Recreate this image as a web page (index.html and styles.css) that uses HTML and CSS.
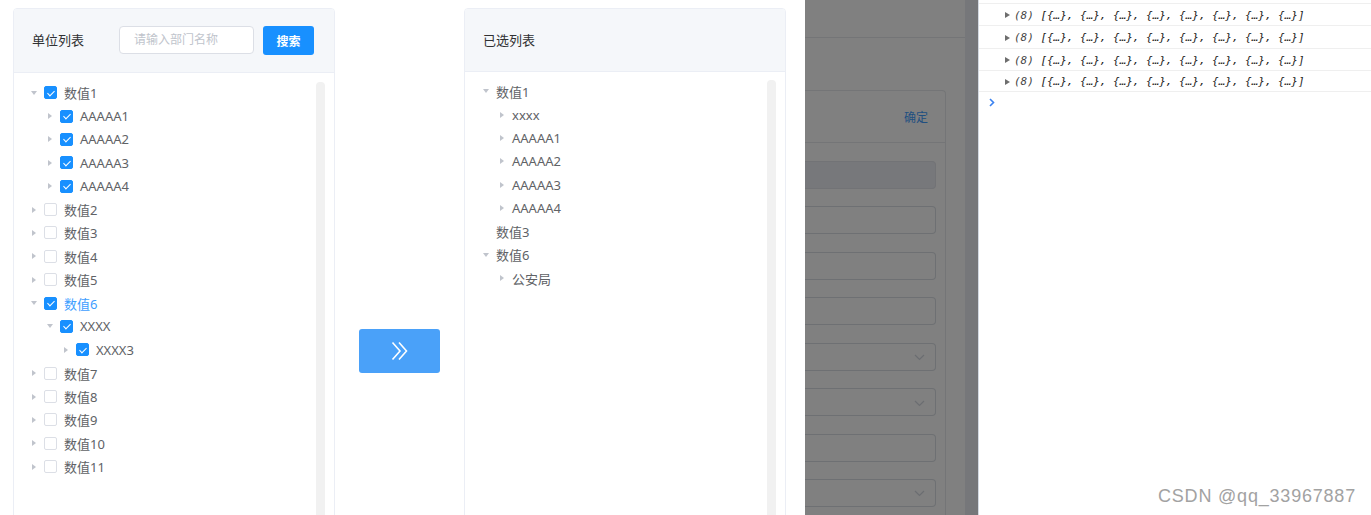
FILE: index.html
```html
<!DOCTYPE html>
<html lang="zh">
<head>
<meta charset="utf-8">
<title>Transfer Tree</title>
<link rel="stylesheet" href="styles.css">
</head>
<body>
<div class="screen">
  <main class="app">
    <section class="panel panel-left">
      <header class="panel-head">
        <span class="panel-title">单位列表</span>
        <div class="search">
          <input class="search-input" type="text" placeholder="请输入部门名称">
          <button class="btn-search" type="button">搜索</button>
        </div>
      </header>
      <div class="panel-body">
        <ul class="tree tree-check">
          <li class="node"><span class="caret down"></span><span class="cb on"></span><span class="label">数值1</span></li>
          <li class="node lv2"><span class="caret right"></span><span class="cb on"></span><span class="label">AAAAA1</span></li>
          <li class="node lv2"><span class="caret right"></span><span class="cb on"></span><span class="label">AAAAA2</span></li>
          <li class="node lv2"><span class="caret right"></span><span class="cb on"></span><span class="label">AAAAA3</span></li>
          <li class="node lv2"><span class="caret right"></span><span class="cb on"></span><span class="label">AAAAA4</span></li>
          <li class="node"><span class="caret right"></span><span class="cb"></span><span class="label">数值2</span></li>
          <li class="node"><span class="caret right"></span><span class="cb"></span><span class="label">数值3</span></li>
          <li class="node"><span class="caret right"></span><span class="cb"></span><span class="label">数值4</span></li>
          <li class="node"><span class="caret right"></span><span class="cb"></span><span class="label">数值5</span></li>
          <li class="node current"><span class="caret down"></span><span class="cb on"></span><span class="label">数值6</span></li>
          <li class="node lv2"><span class="caret down"></span><span class="cb on"></span><span class="label">XXXX</span></li>
          <li class="node lv3"><span class="caret right"></span><span class="cb on"></span><span class="label">XXXX3</span></li>
          <li class="node"><span class="caret right"></span><span class="cb"></span><span class="label">数值7</span></li>
          <li class="node"><span class="caret right"></span><span class="cb"></span><span class="label">数值8</span></li>
          <li class="node"><span class="caret right"></span><span class="cb"></span><span class="label">数值9</span></li>
          <li class="node"><span class="caret right"></span><span class="cb"></span><span class="label">数值10</span></li>
          <li class="node"><span class="caret right"></span><span class="cb"></span><span class="label">数值11</span></li>
        </ul>
        <div class="scroll-track"></div>
      </div>
    </section>

    <div class="transfer">
      <button class="btn-transfer" type="button" aria-label="添加">
        <svg width="17" height="20" viewBox="0 0 17 20" fill="none" stroke="#fff" stroke-width="1.6" stroke-linejoin="miter">
          <path d="M1.5 1.5 L9 10 L1.5 18.5"/>
          <path d="M8 1.5 L15.5 10 L8 18.5"/>
        </svg>
      </button>
    </div>

    <section class="panel panel-right">
      <header class="panel-head">
        <span class="panel-title">已选列表</span>
      </header>
      <div class="panel-body">
        <ul class="tree tree-plain">
          <li class="node"><span class="caret down"></span><span class="label">数值1</span></li>
          <li class="node lv2"><span class="caret right"></span><span class="label">xxxx</span></li>
          <li class="node lv2"><span class="caret right"></span><span class="label">AAAAA1</span></li>
          <li class="node lv2"><span class="caret right"></span><span class="label">AAAAA2</span></li>
          <li class="node lv2"><span class="caret right"></span><span class="label">AAAAA3</span></li>
          <li class="node lv2"><span class="caret right"></span><span class="label">AAAAA4</span></li>
          <li class="node"><span class="caret"></span><span class="label">数值3</span></li>
          <li class="node"><span class="caret down"></span><span class="label">数值6</span></li>
          <li class="node lv2"><span class="caret right"></span><span class="label">公安局</span></li>
        </ul>
        <div class="scroll-track"></div>
      </div>
    </section>
  </main>

  <div class="modal-bg">
    <div class="under">
      <div class="under-top"></div>
      <div class="under-card">
        <div class="under-card-head"><span class="under-ok">确定</span></div>
        <div class="under-form">
          <div class="field disabled"></div>
          <div class="field"></div>
          <div class="field"></div>
          <div class="field"></div>
          <div class="field select"><svg width="11" height="7" viewBox="0 0 11 7" fill="none" stroke="#6b6d71" stroke-width="1.2"><path d="M1 1 L5.5 5.5 L10 1"/></svg></div>
          <div class="field select"><svg width="11" height="7" viewBox="0 0 11 7" fill="none" stroke="#6b6d71" stroke-width="1.2"><path d="M1 1 L5.5 5.5 L10 1"/></svg></div>
          <div class="field"></div>
          <div class="field select"><svg width="11" height="7" viewBox="0 0 11 7" fill="none" stroke="#6b6d71" stroke-width="1.2"><path d="M1 1 L5.5 5.5 L10 1"/></svg></div>
        </div>
      </div>
    </div>
    <div class="under-scroll"></div>
  </div>

  <aside class="console">
    <div class="con-row"><span class="tri"></span><span class="con-text"><span class="len">(8)</span> [{…}, {…}, {…}, {…}, {…}, {…}, {…}, {…}]</span></div>
    <div class="con-row"><span class="tri"></span><span class="con-text"><span class="len">(8)</span> [{…}, {…}, {…}, {…}, {…}, {…}, {…}, {…}]</span></div>
    <div class="con-row"><span class="tri"></span><span class="con-text"><span class="len">(8)</span> [{…}, {…}, {…}, {…}, {…}, {…}, {…}, {…}]</span></div>
    <div class="con-row"><span class="tri"></span><span class="con-text"><span class="len">(8)</span> [{…}, {…}, {…}, {…}, {…}, {…}, {…}, {…}]</span></div>
    <div class="con-prompt">
      <svg width="6" height="9" viewBox="0 0 6 9" fill="none" stroke="#3b82f0" stroke-width="1.6"><path d="M1 1 L4.5 4.5 L1 8"/></svg>
    </div>
  </aside>

  <div class="watermark">CSDN @qq_33967887</div>
</div>
</body>
</html>
```

FILE: styles.css
```css
* { box-sizing: border-box; }
html, body { margin: 0; padding: 0; }
body {
  background: #fff;
  font-family: "Noto Sans", "Noto Sans CJK SC", sans-serif;
  color: #606266;
  overflow: hidden;
}
ul { list-style: none; margin: 0; padding: 0; }

.screen {
  position: relative;
  display: flex;
  width: 1371px;
  height: 515px;
  overflow: hidden;
}

/* ---------- main app ---------- */
.app {
  width: 805px;
  flex: none;
  display: flex;
  align-items: flex-start;
  padding: 8px 0 0 13px;
}
.panel {
  width: 322px;
  height: 640px;
  flex: none;
  border: 1px solid #ebeef5;
  border-radius: 4px;
  background: #fff;
  display: flex;
  flex-direction: column;
  overflow: hidden;
}
.panel-head {
  flex: none;
  display: flex;
  align-items: center;
  background: #f5f7fa;
  border-bottom: 1px solid #ebeef5;
  padding: 0 20px 0 18px;
}
.panel-left .panel-head { height: 64px; }
.panel-right .panel-head { height: 63px; }
.panel-title {
  font-size: 13px;
  color: #303133;
  line-height: 1;
}
.search {
  margin-left: auto;
  display: flex;
  align-items: center;
  gap: 9px;
}
.search-input {
  width: 135px;
  height: 28px;
  border: 1px solid #dcdfe6;
  border-radius: 4px;
  padding: 0 14px;
  font-family: "Noto Sans", "Noto Sans CJK SC", sans-serif;
  font-size: 12px;
  color: #606266;
  background: #fff;
  outline: none;
  margin-top: -2px;
}
.search-input::placeholder { color: #c0c4cc; }
.btn-search {
  width: 51px;
  height: 29px;
  border: none;
  border-radius: 3px;
  background: #1890ff;
  color: #fff;
  font-family: "Noto Sans", "Noto Sans CJK SC", sans-serif;
  font-size: 12px;
  font-weight: 600;
  padding: 0;
}

.panel-body {
  flex: 1;
  display: flex;
  min-height: 0;
}
.tree { flex: 1; }
.tree-check { padding: 8px 0 0 15px; }
.tree-plain { padding: 7.5px 0 0 16px; }
.scroll-track {
  flex: none;
  width: 9px;
  margin-right: 9px;
  background: #f1f1f1;
  border-radius: 4px 4px 0 0;
}
.panel-left .scroll-track { margin-top: 9px; }
.panel-right .scroll-track { margin-top: 8px; }

.node {
  display: flex;
  align-items: center;
  height: 23.375px;
  font-size: 13px;
  white-space: nowrap;
  color: #606266;
}
.node.lv2 { padding-left: 16px; }
.node.lv3 { padding-left: 32px; }
.node.current .label { color: #409eff; }

.caret {
  flex: none;
  width: 10px;
  height: 10px;
  display: flex;
  align-items: center;
  justify-content: center;
}
.caret.right::before {
  content: "";
  border-left: 4px solid #c0c4cc;
  border-top: 3px solid transparent;
  border-bottom: 3px solid transparent;
}
.caret.down::before {
  content: "";
  border-top: 4px solid #c0c4cc;
  border-left: 3.5px solid transparent;
  border-right: 3.5px solid transparent;
}

.cb {
  flex: none;
  position: relative;
  width: 13px;
  height: 13px;
  margin-left: 5px;
  border: 1px solid #dcdfe6;
  border-radius: 2px;
  background: #fff;
}
.cb.on {
  background: #1890ff;
  border-color: #1890ff;
}
.cb.on::after {
  content: "";
  position: absolute;
  left: 3.5px;
  top: 1.5px;
  width: 3px;
  height: 6px;
  border-right: 1.2px solid #fff;
  border-bottom: 1.2px solid #fff;
  transform: rotate(45deg);
}
.tree-check .label { margin-left: 7px; }
.tree-plain .label { margin-left: 5px; }

.transfer {
  flex: none;
  width: 129px;
  display: flex;
  justify-content: center;
  padding-top: 321px;
}
.btn-transfer {
  width: 81px;
  height: 44px;
  border: none;
  border-radius: 3px;
  background: #4aa1f9;
  display: flex;
  align-items: center;
  justify-content: center;
  padding: 0;
}

/* ---------- dimmed page behind ---------- */
.modal-bg {
  flex: none;
  width: 173px;
  background: #808080;
  display: flex;
}
.under {
  flex: 1;
  display: flex;
  flex-direction: column;
}
.under-top {
  flex: none;
  height: 38px;
  border-bottom: 1px solid #747577;
}
.under-card {
  flex: 1;
  margin-top: 52px;
  margin-right: 19px;
  border: 1px solid #747577;
  border-left: none;
  border-bottom: none;
  border-radius: 0 4px 0 0;
}
.under-card-head {
  height: 52px;
  border-bottom: 1px solid #747577;
  display: flex;
  align-items: center;
  justify-content: flex-end;
  padding-right: 17px;
}
.under-ok {
  font-size: 12px;
  color: #204f80;
  margin-top: 1px;
}
.under-form {
  padding: 18px 9px 0 0;
  display: flex;
  flex-direction: column;
  gap: 17.43px;
}
.field {
  height: 28px;
  border: 1px solid #6e7073;
  border-left: none;
  border-radius: 0 4px 4px 0;
  display: flex;
  align-items: center;
  justify-content: flex-end;
  padding-right: 10px;
}
.field.disabled {
  background: #77787b;
  border-color: #727376;
}
.field.select svg { margin-top: 2px; }
.under-scroll {
  flex: none;
  width: 13px;
  background: #76777a;
}

/* ---------- devtools console ---------- */
.console {
  flex: none;
  width: 393px;
  background: #fff;
  border-left: 1px solid #d3d9e2;
  padding-top: 3px;
}
.con-row {
  display: flex;
  align-items: center;
  height: 22px;
  border-top: 1px solid #efefef;
  padding-left: 26px;
  padding-top: 1px;
}
.con-row:nth-child(2) { height: 23px; }
.con-row:nth-child(4) { border-bottom: 1px solid #efefef; height: 22px; }
.tri {
  flex: none;
  width: 0;
  height: 0;
  border-left: 5px solid #6e6e6e;
  border-top: 3.5px solid transparent;
  border-bottom: 3.5px solid transparent;
  margin-right: 4px;
}
.con-text {
  font-family: "DejaVu Sans Mono", "Liberation Mono", monospace;
  font-style: italic;
  font-size: 11px;
  color: #222;
  letter-spacing: -0.02px;
}
.con-text .len { color: #444; }
.con-prompt {
  height: 21px;
  display: flex;
  align-items: center;
  padding-left: 10px;
}

/* ---------- watermark ---------- */
.watermark {
  position: absolute;
  right: 15px;
  bottom: 8px;
  font-family: "Liberation Sans", Arial, sans-serif;
  font-size: 18px;
  letter-spacing: 0.8px;
  color: #a2a2a2;
  text-shadow: 0 0 1px #fff;
  white-space: nowrap;
}
```
